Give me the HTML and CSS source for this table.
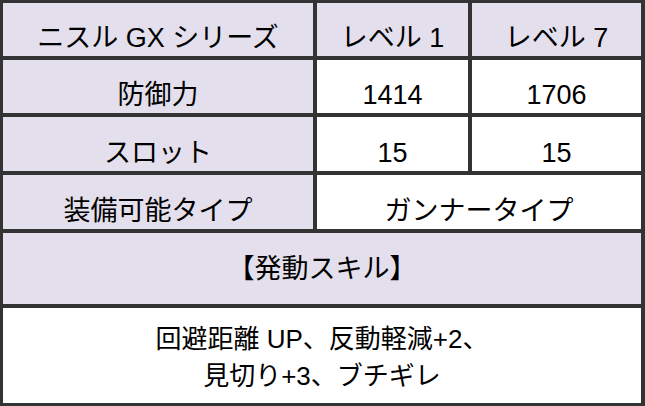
FILE: index.html
```html
<!DOCTYPE html>
<html lang="ja">
<head>
<meta charset="utf-8">
<link rel="stylesheet" href="styles.css">
</head>
<body>
<div class="sheet">
  <div class="cell head">ニスル GX シリーズ</div>
  <div class="cell head">レベル 1</div>
  <div class="cell head">レベル 7</div>

  <div class="cell head">防御力</div>
  <div class="cell">1414</div>
  <div class="cell">1706</div>

  <div class="cell head">スロット</div>
  <div class="cell">15</div>
  <div class="cell">15</div>

  <div class="cell head">装備可能タイプ</div>
  <div class="cell span2">ガンナータイプ</div>

  <div class="cell head span3 middle">【発動スキル】</div>

  <div class="cell span3 middle skills">回避距離 UP、反動軽減+2、<br>見切り+3、ブチギレ</div>
</div>
</body>
</html>
```
FILE: styles.css
```css
html, body {
  margin: 0;
  padding: 0;
  background: #ffffff;
}

.sheet {
  width: 645px;
  height: 406px;
  box-sizing: border-box;
  display: grid;
  grid-template-columns: 310px 151px 169px;
  grid-template-rows: 53px 53px 54px 54px 71px 95px;
  gap: 4px;
  padding: 3px 4px 3px 3px;
  background: #333333;
  font-family: "Liberation Sans", "Noto Sans CJK JP", sans-serif;
  color: #000000;
}

.cell {
  background: #ffffff;
  display: flex;
  align-items: flex-end;
  justify-content: center;
  text-align: center;
  font-size: 27px;
  line-height: 32px;
  padding-bottom: 2px;
  box-sizing: border-box;
}

.head {
  background: #e4dfec;
}

.span2 {
  grid-column: span 2;
}

.span3 {
  grid-column: span 3;
}

.middle {
  align-items: center;
  padding-bottom: 0;
}

.skills {
  font-size: 26px;
  line-height: 37px;
  padding-top: 4px;
}
```
